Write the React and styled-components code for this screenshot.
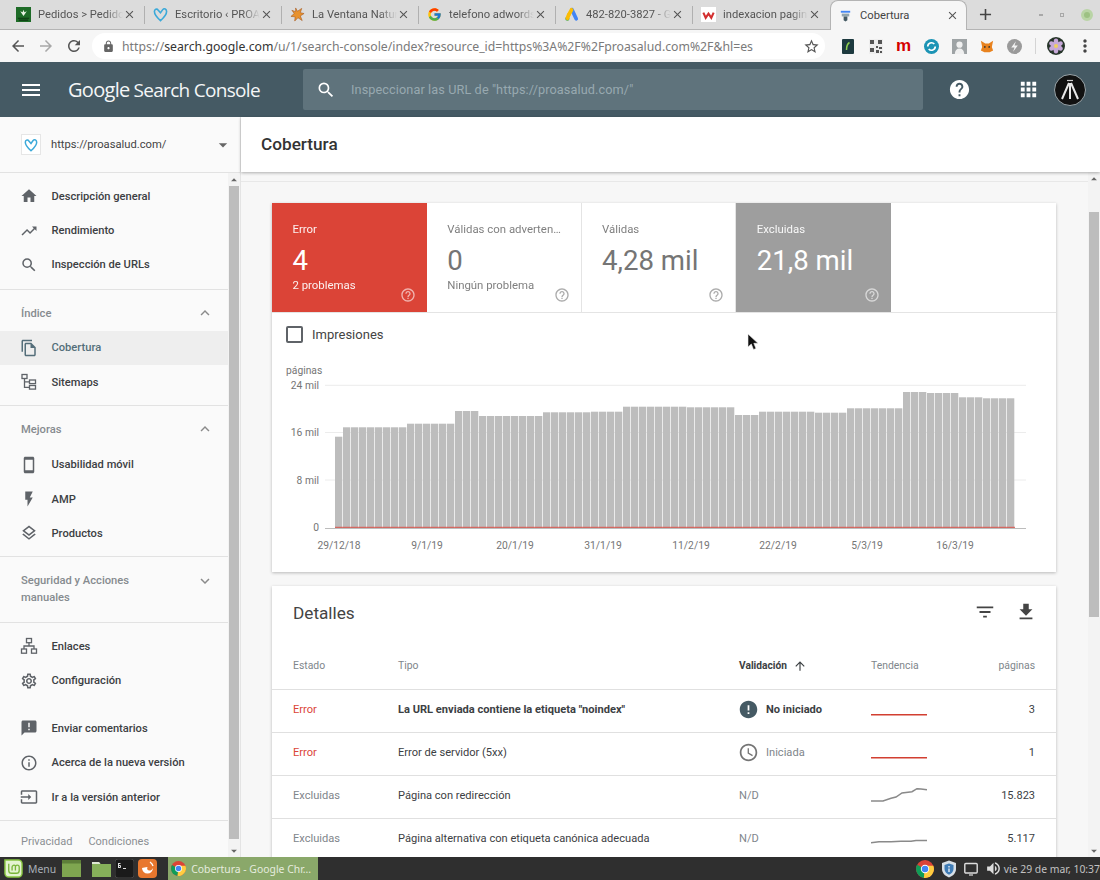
import React from "react";
import styled, { createGlobalStyle } from "styled-components";
import { FcGoogle } from "react-icons/fc";
import {
  MdAccessTime, MdAdd, MdAnnouncement, MdApps, MdArrowBack, MdArrowDropDown, MdArrowDropUp,
  MdArrowForward, MdArrowUpward, MdClose, MdError, MdExpandLess, MdExpandMore, MdFileDownload,
  MdFilterList, MdFlashOn, MdHelp, MdHelpOutline, MdHome, MdInfoOutline, MdInput, MdLock, MdMenu,
  MdMoreVert, MdOutlineFileCopy, MdOutlineLayers, MdOutlineSettings, MdOutlineSmartphone, MdRefresh,
  MdSearch, MdStarBorder, MdTrendingUp, MdVolumeUp,
} from "react-icons/md";

const GlobalStyle = createGlobalStyle`
  html, body { margin: 0; padding: 0; background: #fff; }
  body { font-family: Roboto, "Liberation Sans", sans-serif; }
  * { box-sizing: border-box; }
`;

const Screen = styled.div`
  position: relative;
  width: 1100px;
  height: 880px;
  overflow: hidden;
  display: flex;
  flex-direction: column;
`;

/* browser tabs */
const TabStrip = styled.div`
  height: 30px;
  flex: none;
  display: flex;
  align-items: center;
  padding-left: 8px;
  background: #dcdcdc;
  border-bottom: 1px solid #b4b4b4;
  font-family: Roboto, sans-serif;
`;
const Tab = styled.div`
  width: 137px;
  height: ${(p) => (p.$active ? "30px" : "18px")};
  display: flex;
  align-items: center;
  padding: 0 8px;
  color: #555;
  font-size: 11.2px;
  border-right: 1px solid ${(p) => (p.$sep ? "#b0b0b0" : "transparent")};
  ${(p) => p.$active && `
    margin-top: 1px;
    padding: 0 7px;
    background: #f6f6f6;
    border: 1px solid #b4b4b4;
    border-bottom: none;
    border-radius: 8px 8px 0 0;
    color: #444;
  `}
`;
const Favicon = styled.span`
  width: 15px;
  height: 15px;
  flex: none;
  display: flex;
  align-items: center;
  justify-content: center;
`;
const TabTitle = styled.span`
  flex: 1;
  margin-left: 7px;
  white-space: nowrap;
  overflow: hidden;
  mask-image: ${(p) => (p.$active ? "none" : "linear-gradient(90deg, #000 80%, transparent 100%)")};
`;
const TabClose = styled(MdClose)`
  flex: none;
  font-size: 13px;
  color: #555;
`;
const NewTab = styled(MdAdd)`
  margin-left: 9px;
  font-size: 19px;
  color: #444;
`;
const WindowControls = styled.div`
  margin-left: auto;
  display: flex;
  align-items: center;
  gap: 17px;
  padding-right: 7px;
`;
const WinDash = styled.span`
  width: 4px;
  height: 2px;
  background: #a8a8a8;
`;
const WinDot = styled.span`
  width: 4px;
  height: 4px;
  border: 1px solid #a8a8a8;
`;
const WinClose = styled.span`
  width: 12px;
  height: 12px;
  border-radius: 50%;
  background: #9dc183;
  border: 3px solid #b9d4a5;
`;

/* browser toolbar */
const Toolbar = styled.div`
  height: 32px;
  flex: none;
  display: flex;
  align-items: center;
  padding-left: 9px;
  background: #f6f6f6;
`;
const NavButton = styled.span`
  width: 18px;
  height: 18px;
  margin-right: 10px;
  font-size: 18px;
  line-height: 0;
  color: ${(p) => (p.$off ? "#a8a8a8" : "#555")};
`;
const Omnibox = styled.div`
  width: 733px;
  height: 26px;
  margin-left: -1px;
  padding: 0 5px 0 10px;
  display: flex;
  align-items: center;
  background: #fff;
  border-radius: 13px;
  font-family: "Noto Sans", sans-serif;
  font-size: 12.25px;
  color: #7a7a7a;
  white-space: nowrap;
`;
const LockIcon = styled(MdLock)`
  flex: none;
  font-size: 13px;
  color: #666;
  margin-right: 7px;
`;
const UrlHost = styled.span`
  color: #333;
`;
const StarIcon = styled(MdStarBorder)`
  margin-left: auto;
  font-size: 17px;
  color: #555;
`;
const Extensions = styled.div`
  margin-left: 9px;
  display: grid;
  grid-template-columns: repeat(7, 27.8px);
  justify-items: center;
  align-items: center;
`;
const ExtMark = styled.span`
  font: 700 17px/16px "Liberation Sans", sans-serif;
  color: #d50000;
`;
const ToolbarSep = styled.span`
  width: 1px;
  height: 16px;
  margin-left: 6px;
  background: #d4d4d4;
`;
const ProfileDot = styled.span`
  margin-left: 11px;
  line-height: 0;
`;
const MenuDots = styled(MdMoreVert)`
  margin-left: 10px;
  font-size: 20px;
  color: #444;
`;

/* search console bar */
const AppBar = styled.header`
  height: 55px;
  flex: none;
  display: flex;
  align-items: center;
  background: #455a64;
  color: #fff;
`;
const Hamburger = styled(MdMenu)`
  margin-left: 19px;
  font-size: 24px;
`;
const Logo = styled.div`
  width: 235px;
  margin-left: 25px;
  font-family: "Open Sans", sans-serif;
  font-size: 19px;
  letter-spacing: -0.7px;
  white-space: nowrap;
  color: #f4f6f7;
`;
const LogoStrong = styled.span`
  font-size: 20px;
  margin-right: 4px;
`;
const SearchBox = styled.div`
  width: 620px;
  height: 41px;
  display: flex;
  align-items: center;
  padding-left: 13px;
  background: #5f737c;
  border-radius: 2px;
  color: #98a9b0;
  font-size: 12.7px;
  letter-spacing: 0.1px;
`;
const SearchGlyph = styled(MdSearch)`
  flex: none;
  font-size: 20px;
  color: #fff;
  margin-right: 15px;
`;
const BarIcon = styled.span`
  line-height: 0;
  font-size: ${(p) => p.$size}px;
  margin-left: ${(p) => p.$left}px;
`;

/* body */
const Body = styled.div`
  flex: 1;
  min-height: 0;
  display: flex;
  color: #3c4043;
`;
const Sidebar = styled.aside`
  width: 241px;
  flex: none;
  display: flex;
  flex-direction: column;
  background: #fafafa;
  border-right: 1px solid #e4e4e4;
`;
const PropertyPicker = styled.div`
  height: 56px;
  flex: none;
  display: flex;
  align-items: center;
  padding: 0 7px 0 21px;
  background: #fafafa;
  border-bottom: 1px solid #e2e2e2;
  font-size: 11.2px;
  color: #444;
`;
const PropertyIcon = styled.span`
  width: 20px;
  height: 21px;
  margin-right: 10px;
  display: flex;
  align-items: center;
  justify-content: center;
  background: #fff;
  border: 1px solid #e6e6e6;
`;
const PropertyCaret = styled(MdArrowDropDown)`
  margin-left: auto;
  font-size: 20px;
  color: #666;
`;
const SideScroll = styled.div`
  flex: 1;
  min-height: 0;
  display: flex;
`;
const NavColumn = styled.nav`
  flex: 1;
  min-width: 0;
`;
const NavGroup = styled.div`
  padding: ${(p) => p.$top ?? 0}px 0 ${(p) => p.$bottom ?? 6.5}px;
  border-bottom: ${(p) => (p.$open ? "none" : "1px solid #e2e2e2")};
`;
const NavItem = styled.div`
  height: 34.4px;
  display: flex;
  align-items: center;
  padding-left: 20px;
  font-size: 11.15px;
  font-weight: 500;
  color: ${(p) => (p.$active ? "#546e7a" : "#3c4043")};
  background: ${(p) => (p.$active ? "#eeeeee" : "transparent")};
`;
const NavIcon = styled.span`
  width: 18px;
  margin-right: 13.5px;
  display: flex;
  justify-content: center;
  font-size: 18px;
  color: ${(p) => (p.$active ? "#546e7a" : "#5f6368")};
`;
const SectionHead = styled.div`
  min-height: 41px;
  display: flex;
  align-items: flex-start;
  justify-content: space-between;
  padding: 15px 14px 0 21px;
  font-size: 11.2px;
  line-height: 17px;
  font-weight: 500;
  color: #868b8f;
`;
const SectionLabel = styled.span`
  width: 130px;
`;
const SectionCaret = styled.span`
  font-size: 18px;
  line-height: 0;
  margin-top: ${(p) => (p.$tall ? "0" : "-1px")};
  color: #8a8a8a;
`;
const NavFooter = styled.div`
  height: 35px;
  display: flex;
  gap: 16px;
  padding: 14px 0 0 21px;
  font-size: 11px;
  color: #8b8f93;
`;
const ScrollBar = styled.div`
  width: 12px;
  flex: none;
  display: flex;
  flex-direction: column;
  align-items: center;
  background: #f3f3f3;
  color: #666;
`;
const ScrollArrow = styled.span`
  height: 13px;
  flex: none;
  font-size: 14px;
  line-height: 13px;
  display: flex;
  justify-content: center;
`;
const ScrollGap = styled.div`
  flex: 1;
`;
const ScrollThumb = styled.div`
  width: 10px;
  flex: none;
  height: ${(p) => p.$h}px;
  margin-top: ${(p) => p.$top}px;
  background: #bdbdbd;
`;

/* main column */
const Main = styled.main`
  flex: 1;
  min-width: 0;
  display: flex;
  flex-direction: column;
  background: #f7f7f7;
`;
const PageHead = styled.div`
  position: relative;
  z-index: 1;
  height: 55px;
  flex: none;
  display: flex;
  align-items: center;
  padding: 0 0 1px 20px;
  background: #fff;
  box-shadow: 0 1px 3px rgba(0, 0, 0, 0.3);
  font-size: 17.2px;
  font-weight: 500;
  color: #333;
`;
const MainRow = styled.div`
  flex: 1;
  min-height: 0;
  display: flex;
`;
const Content = styled.div`
  flex: 1;
  min-width: 0;
  overflow: hidden;
  padding-top: 9px;
`;
const ContentInner = styled.div`
  border-top: 1px solid #e8e8e8;
  padding: 21px 32px 0 31px;
  display: flex;
  flex-direction: column;
  gap: 14px;
`;
const Card = styled.section`
  background: #fff;
  box-shadow: 0 1px 3px rgba(0, 0, 0, 0.25);
`;
const Tiles = styled.div`
  display: flex;
  height: 110px;
  border-bottom: 1px solid #e4e4e4;
`;
const toneColors = {
  error: "background:#db4437;color:#fff;",
  excluded: "background:#9e9e9e;color:#fff;",
  plain: "background:#fff;color:#757575;border-right:1px solid #e4e4e4;",
};
const Tile = styled.div`
  position: relative;
  width: 154.75px;
  padding: 19px 18px 0 20.5px;
  ${(p) => toneColors[p.$tone]}
`;
const TileLabel = styled.div`
  font-size: 11.4px;
  line-height: 14px;
  white-space: nowrap;
  overflow: hidden;
  text-overflow: ellipsis;
  opacity: 0.92;
`;
const TileValue = styled.div`
  margin-top: 8px;
  font-size: 27.6px;
  line-height: 34px;
  white-space: nowrap;
`;
const TileNote = styled.div`
  font-size: 11.4px;
  line-height: 14px;
  opacity: 0.92;
`;
const TileHelp = styled(MdHelpOutline)`
  position: absolute;
  right: 11px;
  bottom: 9px;
  font-size: 16px;
  opacity: 0.6;
`;
const ToggleRow = styled.div`
  height: 44px;
  display: flex;
  align-items: center;
  padding: 0 0 2px 14px;
  font-size: 13px;
  color: #444;
`;
const CheckBox = styled.span`
  width: 17px;
  height: 17px;
  margin-right: 9px;
  border: 2px solid #5f6368;
  border-radius: 2px;
`;
const ChartBox = styled.div`
  height: 215px;
  line-height: 0;
`;
const DetailsHead = styled.div`
  height: 54px;
  display: flex;
  align-items: center;
  padding: 0 19px 0 21px;
  font-size: 17.2px;
  color: #444;
`;
const DetailsTitle = styled.span`
  flex: 1;
`;
const HeadIcon = styled.span`
  font-size: 22px;
  line-height: 0;
  margin: -3px 0 0 ${(p) => p.$left}px;
  color: #444;
`;
const Row = styled.div`
  display: grid;
  grid-template-columns: 105px 341px 132px 1fr 90px;
  align-items: center;
  height: ${(p) => (p.$head ? "50px" : "43px")};
  padding: ${(p) => (p.$head ? "2px 21px 0" : "0 21px 3px")};
  border-bottom: 1px solid #e0e0e0;
  font-size: 11.1px;
  color: #3c4043;
`;
const HeadCell = styled.span`
  display: flex;
  align-items: center;
  font-size: ${(p) => (p.$strong ? "10.2px" : "10.4px")};
  font-weight: ${(p) => (p.$strong ? 700 : 400)};
  color: ${(p) => (p.$strong ? "#3c4043" : "#80868b")};
  justify-content: ${(p) => (p.$end ? "flex-end" : "flex-start")};
`;
const SortArrow = styled(MdArrowUpward)`
  margin-left: 6px;
  font-size: 14px;
`;
const StatusCell = styled.span`
  color: ${(p) => (p.$error ? "#db4437" : "#80868b")};
`;
const TypeCell = styled.span`
  font-weight: ${(p) => (p.$strong ? 700 : 400)};
`;
const ValidationCell = styled.span`
  display: flex;
  align-items: center;
  gap: 7px;
  font-weight: ${(p) => (p.$strong ? 700 : 400)};
  color: ${(p) => (p.$muted ? "#80868b" : "#3c4043")};
`;
const ValidationIcon = styled.span`
  font-size: 21px;
  line-height: 0;
  margin-left: -1px;
  color: ${(p) => p.$color};
`;
const TrendCell = styled.span`
  line-height: 0;
`;
const PagesCell = styled.span`
  text-align: right;
  font-size: 11px;
`;

/* taskbar */
const Taskbar = styled.footer`
  height: 23px;
  flex: none;
  display: flex;
  align-items: center;
  padding-left: 4px;
  background: #2f2f2f;
  color: #b8b8b8;
  font-family: "Noto Sans", sans-serif;
  font-size: 10.7px;
`;
const MenuLabel = styled.span`
  margin: 0 6px 0 5px;
  font-size: 10.4px;
  color: #a9b0b8;
`;
const TaskSlot = styled.span`
  line-height: 0;
  margin-left: ${(p) => p.$left ?? 0}px;
`;
const WindowButton = styled.div`
  width: 150px;
  height: 23px;
  margin-left: 11px;
  display: flex;
  align-items: center;
  gap: 5px;
  padding-left: 3px;
  background: #8aa86a;
  color: #e6ecdf;
  font-size: 10.4px;
  white-space: nowrap;
  svg { flex: none; }
`;
const Tray = styled.div`
  margin-left: auto;
  display: flex;
  align-items: center;
  gap: 7px;
`;
const TrayText = styled.span`
  margin-left: -5px;
  font-size: 10.4px;
  white-space: nowrap;
  color: #c2c2c2;
`;
const Pointer = styled.svg`
  position: absolute;
  left: 747px;
  top: 333px;
`;

const Heart = ({ size = 15 }) => (
  <svg width={size} height={size} viewBox="0 0 16 16" fill="none" stroke="#3ba9d9" strokeWidth="1.7">
    <path d="M8 14.5C4 11 1.5 8 1.5 4.8 1.5 2.8 4 1 5.6 3.4L8 6.2l2.4-3.4C12 .8 14.5 2.5 14.5 4.8 14.5 8 12 11 8 14.5z" />
  </svg>
);
const VShop = () => (
  <svg width="15" height="15" viewBox="0 0 16 16">
    <rect width="16" height="16" fill="#1e6b27" />
    <path d="M8 9.5 4.5 4.5 7 5.5 8 3l1 2.5 2.5-1z" fill="#eaf3e4" />
    <path d="M2 12h12M3 14h10" stroke="#0c3a12" strokeWidth="1.3" />
  </svg>
);
const Splat = () => (
  <svg width="15" height="15" viewBox="0 0 16 16">
    <path d="M6 1l2 3.5L12.500 1.500 11 6l4 1-4 2.500 2 5-4.500-3L5 15l.5-4.500L1 10l3.500-3L2 3.500l4 1.500z" fill="#e8912c" stroke="#a4561a" strokeWidth=".6" />
  </svg>
);
const AdsMark = () => (
  <svg width="15" height="15" viewBox="0 0 16 16" fill="none" strokeLinecap="round" strokeWidth="4">
    <path d="M8.500 3 13 12.500" stroke="#4285f4" />
    <path d="M8 3 5 8.500" stroke="#fbbc04" />
    <circle cx="3.600" cy="12.500" r="2.200" fill="#34a853" stroke="none" />
    <path d="M5 8.500 3.600 12" stroke="#fbbc04" />
  </svg>
);
const WMark = () => (
  <svg width="15" height="15" viewBox="0 0 16 16" fill="none">
    <rect width="16" height="16" fill="#fff" />
    <path d="M2.500 6 5 11.500 8 7l3 4.500L13.500 6" stroke="#d32f2f" strokeWidth="2.200" />
  </svg>
);
const ConsoleMark = () => (
  <svg width="15" height="15" viewBox="0 0 16 16">
    <path d="M3 3h10v2H3z" fill="#4285f4" />
    <path d="M4 6h8v3H4z" fill="#90a4ae" />
    <path d="M6 9h4v4l-2 1.500L6 13z" fill="#455a64" />
  </svg>
);
const ChromeMark = ({ size = 15 }) => (
  <svg width={size} height={size} viewBox="0 0 16 16">
    <circle cx="8" cy="8" r="8" fill="#db4437" />
    <path d="M8 8 1 4.200A8 8 0 0 0 7 15.900z" fill="#0f9d58" />
    <path d="M8 5h7.400A8 8 0 0 1 7 15.900z" fill="#ffcd40" />
    <circle cx="8" cy="8" r="3.700" fill="#fff" />
    <circle cx="8" cy="8" r="2.900" fill="#4285f4" />
  </svg>
);
const SitemapIcon = () => (
  <svg width="18" height="18" viewBox="0 0 18 18" fill="none" stroke="#5f6368" strokeWidth="1.300">
    <rect x="2" y="1.500" width="5" height="4" />
    <rect x="9.500" y="7" width="6" height="3.600" />
    <rect x="9.500" y="12.500" width="6" height="3.600" />
    <path d="M4.500 5.500V14.300H9.500M4.500 8.800H9.500" />
  </svg>
);
const LinksIcon = () => (
  <svg width="18" height="18" viewBox="0 0 18 18" fill="none" stroke="#5f6368" strokeWidth="1.300">
    <rect x="6.500" y="1.500" width="5" height="4.200" />
    <rect x="1.500" y="12" width="5" height="4.200" />
    <rect x="11.500" y="12" width="5" height="4.200" />
    <path d="M9 5.700V9M4 12V9H14V12" />
  </svg>
);
const AwenAvatar = () => (
  <svg width="32" height="32" viewBox="0 0 32 32">
    <circle cx="16" cy="16" r="15.500" fill="#111" stroke="#9aa5aa" strokeWidth="1" />
    <path d="M16 9v16M15 9 8 25M17 9l7 16" stroke="#e8e8e8" strokeWidth="2" fill="none" />
    <path d="M13 6.500h6" stroke="#ccc" strokeWidth="1.200" />
  </svg>
);
const FlowerAvatar = () => (
  <svg width="18" height="18" viewBox="0 0 18 18">
    <circle cx="9" cy="9" r="9" fill="#27352a" />
    {[0, 60, 120, 180, 240, 300].map((a) => (
      <ellipse key={a} cx="9" cy="4.800" rx="2.300" ry="3.300" fill="#c7a9d8" transform={`rotate(${a} 9 9)`} />
    ))}
    <circle cx="9" cy="9" r="2" fill="#f0d060" />
  </svg>
);
const QrMark = () => (
  <svg width="14" height="15" viewBox="0 0 14 15" fill="#555">
    <rect width="14" height="15" fill="#eee" />
    <path d="M1 1h4v4H1zM9 1h4v4H9zM1 9h4v4H1zM7 7h2v2H7zM10 8h3v2h-3zM7 11h3v3H7zM11 12h2v2h-2z" />
  </svg>
);
const ExtDark = () => (
  <svg width="12" height="15" viewBox="0 0 12 15">
    <rect width="12" height="15" rx="1" fill="#1d3a3f" />
    <path d="M7.500 3.500C5 5 4.500 8 4.500 11" stroke="#8fd14f" strokeWidth="1.500" fill="none" />
  </svg>
);
const ExtRing = () => (
  <svg width="15" height="15" viewBox="0 0 16 16">
    <circle cx="8" cy="8" r="8" fill="#1c94b5" />
    <path d="M4 8a4 4 0 0 1 7-2.600M12 8a4 4 0 0 1-7 2.600" stroke="#fff" strokeWidth="1.800" fill="none" />
  </svg>
);
const ExtPerson = () => (
  <svg width="15" height="15" viewBox="0 0 16 16">
    <rect width="16" height="16" fill="#9ea3a5" />
    <circle cx="8" cy="6" r="3.300" fill="#f0f0f0" />
    <path d="M3 16c0-4 2-6 5-6s5 2 5 6z" fill="#f0f0f0" />
  </svg>
);
const ExtFox = () => (
  <svg width="14" height="14" viewBox="0 0 16 16">
    <path d="M1 2l5 3h4l5-3-1.500 7L15 13l-4 2H5l-4-2 1.500-4z" fill="#e8821e" />
    <circle cx="5.500" cy="9" r="1" fill="#333" />
    <circle cx="10.500" cy="9" r="1" fill="#333" />
  </svg>
);
const ExtBolt = () => (
  <svg width="15" height="15" viewBox="0 0 16 16">
    <circle cx="8" cy="8" r="8" fill="#9a9a9a" />
    <path d="M9.500 2.500 4.500 9H8l-1.500 4.500L11.500 7H8z" fill="#f4f4f4" />
  </svg>
);
const MintLogo = () => (
  <svg width="19" height="19" viewBox="0 0 20 20" fill="none">
    <path d="M1 1h14a4 4 0 0 1 4 4v10a4 4 0 0 1-4 4H5a4 4 0 0 1-4-4z" fill="#e4f3d0" stroke="#87c540" strokeWidth="1.500" />
    <path d="M5 5v7a3 3 0 0 0 3 3h5a3 3 0 0 0 3-3V8.500a2 2 0 0 0-4 0V12M8.500 12V8.500a2 2 0 0 1 3.500-1.300" stroke="#79b539" strokeWidth="1.400" />
  </svg>
);
const FolderPlain = () => (
  <svg width="19" height="17" viewBox="0 0 19 17">
    <rect width="19" height="17" fill="#7fa650" />
    <rect width="19" height="3.500" fill="#5d7e39" />
  </svg>
);
const FolderTab = () => (
  <svg width="19" height="17" viewBox="0 0 19 17">
    <path d="M0 2h7l1.500 2H19v13H0z" fill="#86b05a" />
    <path d="M0 2h7l1.500 2H0z" fill="#dfe8d4" />
  </svg>
);
const TerminalIcon = () => (
  <svg width="19" height="19" viewBox="0 0 19 19" fill="none">
    <rect width="19" height="19" rx="3" fill="#1a1a1a" stroke="#444" />
    <path d="M3.500 4v5M5.500 4.500h-2v2h2v2h-2M8 9.500h3" stroke="#ddd" strokeWidth="1" />
  </svg>
);
const FoxOrange = () => (
  <svg width="19" height="19" viewBox="0 0 19 19" fill="none">
    <rect width="19" height="19" rx="4" fill="#e8772e" />
    <path d="M4 9a5.500 5.500 0 1 0 11 0c-1 2-2 2.500-3.500 2.500-2 0-3-1.500-2-3.500-2.500 0-4 1-5.500 1z" fill="#fff" />
    <path d="M12 3c1.500 1 2.500 2 3 4" stroke="#fff" strokeWidth="1.300" />
  </svg>
);
const ShieldIcon = () => (
  <svg width="16" height="18" viewBox="0 0 16 18">
    <path d="M8 .5 15 3v6c0 4-3 7-7 8.500C4 16 1 13 1 9V3z" fill="#d7dfe6" />
    <path d="M8 3.500 12.500 5v4c0 2.500-2 4.700-4.500 5.700C5.500 13.700 3.500 11.500 3.500 9V5z" fill="#3f7cb6" />
    <path d="M8 6v1.500M8 8.500V12" stroke="#fff" strokeWidth="1.200" />
  </svg>
);
const MonitorIcon = () => (
  <svg width="14" height="14" viewBox="0 0 14 14" fill="none">
    <rect x=".8" y="1.500" width="12.400" height="9.500" rx="1" stroke="#ddd" strokeWidth="1.400" />
    <path d="M5 13h4" stroke="#ddd" strokeWidth="1.200" />
  </svg>
);

const runs = [
  [1, 436.7], [8, 427.3], [6, 423.7], [3, 411], [8, 416], [6, 412.3], [4, 411.7],
  [8, 406.7], [6, 407.3], [3, 415], [7, 411.7], [4, 412.7], [7, 408.3], [3, 392],
  [4, 393], [3, 397.3], [4, 398.3],
];
const barTops = runs.flatMap(([n, top]) => Array(n).fill(top));

// svg y = screen y - 357, svg x = screen x - 272
const gridRows = [
  ["24 mil", 28.3],
  ["16 mil", 75.5],
  ["8 mil", 123],
];
const xLabels = [
  ["29/12/18", 67], ["9/1/19", 155], ["20/1/19", 243], ["31/1/19", 331],
  ["11/2/19", 419], ["22/2/19", 506], ["5/3/19", 595], ["16/3/19", 683],
];

const CoverageChart = () => (
  <svg width="784" height="215" viewBox="0 0 784 215" fontFamily="Roboto, sans-serif" fontSize="10.3" fill="#757575">
    <text x="14" y="17">páginas</text>
    {gridRows.map(([label, y]) => (
      <g key={label}>
        <line x1="53" x2="754" y1={y} y2={y} stroke="#ececec" />
        <text x="47" y={y + 3.500} textAnchor="end">{label}</text>
      </g>
    ))}
    {barTops.map((top, i) => (
      <rect key={i} x={63 + i * 8} y={top - 357} width="7.300" height={527.5 - top + 0.5} fill="#bdbdbd" />
    ))}
    <line x1="53" x2="754" y1="171.500" y2="171.500" stroke="#bcbcbc" />
    <line x1="63" x2="743" y1="170.300" y2="170.300" stroke="#d9534a" strokeWidth="1" />
    <text x="47" y="174" textAnchor="end">0</text>
    {xLabels.map(([label, x]) => (
      <text key={label} x={x} y="192" textAnchor="middle">{label}</text>
    ))}
  </svg>
);

const Spark = ({ d, color }) => (
  <svg width="56" height="16" viewBox="0 0 56 16" fill="none">
    <path d={d} stroke={color} strokeWidth="1.500" />
  </svg>
);

const tabs = [
  { title: "Pedidos > Pedidos", icon: <VShop />, sep: true },
  { title: "Escritorio ‹ PROASALUD", icon: <Heart />, sep: true },
  { title: "La Ventana Natural", icon: <Splat />, sep: true },
  { title: "telefono adwords", icon: <FcGoogle size={15} />, sep: true },
  { title: "482-820-3827 - Google", icon: <AdsMark />, sep: true },
  { title: "indexacion paginas", icon: <WMark /> },
];

const rows = [
  { status: "Error", error: true, type: 'La URL enviada contiene la etiqueta "noindex"', strong: true, validation: "No iniciado", trend: "M0 12.700H56", color: "#d23f31", pages: "3" },
  { status: "Error", error: true, type: "Error de servidor (5xx)", validation: "Iniciada", clock: true, trend: "M0 12.700H56", color: "#d23f31", pages: "1" },
  { status: "Excluidas", type: "Página con redirección", validation: "N/D", trend: "M0 13H12L20 10.300 25 9 31 5 41 3.700 46 .7 50 1 56 1.800", color: "#8a8a8a", pages: "15.823" },
  { status: "Excluidas", type: "Página alternativa con etiqueta canónica adecuada", validation: "N/D", trend: "M0 11.700 8 10.700H20L30 10.300H40L45 9.500H56", color: "#8a8a8a", pages: "5.117" },
];

const Item = ({ icon, label, active }) => (
  <NavItem $active={active}>
    <NavIcon $active={active}>{icon}</NavIcon>
    {label}
  </NavItem>
);

export default function App() {
  return (
    <Screen>
      <GlobalStyle />
      <TabStrip>
        {tabs.map((t) => (
          <Tab key={t.title} $sep={t.sep}>
            <Favicon>{t.icon}</Favicon>
            <TabTitle>{t.title}</TabTitle>
            <TabClose />
          </Tab>
        ))}
        <Tab $active>
          <Favicon><ConsoleMark /></Favicon>
          <TabTitle $active>Cobertura</TabTitle>
          <TabClose />
        </Tab>
        <NewTab />
        <WindowControls>
          <WinDash />
          <WinDot />
          <WinClose />
        </WindowControls>
      </TabStrip>

      <Toolbar>
        <NavButton><MdArrowBack /></NavButton>
        <NavButton $off><MdArrowForward /></NavButton>
        <NavButton><MdRefresh /></NavButton>
        <Omnibox>
          <LockIcon />
          https://<UrlHost>search.google.com</UrlHost>/u/1/search-console/index?resource_id=https%3A%2F%2Fproasalud.com%2F&amp;hl=es
          <StarIcon />
        </Omnibox>
        <Extensions>
          <ExtDark />
          <QrMark />
          <ExtMark>m</ExtMark>
          <ExtRing />
          <ExtPerson />
          <ExtFox />
          <ExtBolt />
        </Extensions>
        <ToolbarSep />
        <ProfileDot><FlowerAvatar /></ProfileDot>
        <MenuDots />
      </Toolbar>

      <AppBar>
        <Hamburger />
        <Logo><LogoStrong>Google</LogoStrong>Search Console</Logo>
        <SearchBox>
          <SearchGlyph />
          Inspeccionar las URL de "https://proasalud.com/"
        </SearchBox>
        <BarIcon $size={23} $left={25}><MdHelp /></BarIcon>
        <BarIcon $size={23} $left={46}><MdApps /></BarIcon>
        <BarIcon $size={32} $left={14}><AwenAvatar /></BarIcon>
      </AppBar>

      <Body>
        <Sidebar>
          <PropertyPicker>
            <PropertyIcon><Heart size={14} /></PropertyIcon>
            https://proasalud.com/
            <PropertyCaret />
          </PropertyPicker>
          <SideScroll>
            <NavColumn>
              <NavGroup $top={6}>
                <Item icon={<MdHome />} label="Descripción general" />
                <Item icon={<MdTrendingUp />} label="Rendimiento" />
                <Item icon={<MdSearch />} label="Inspección de URLs" />
              </NavGroup>
              <NavGroup $bottom={6}>
                <SectionHead>
                  <SectionLabel>Índice</SectionLabel>
                  <SectionCaret><MdExpandLess /></SectionCaret>
                </SectionHead>
                <Item active icon={<MdOutlineFileCopy />} label="Cobertura" />
                <Item icon={<SitemapIcon />} label="Sitemaps" />
              </NavGroup>
              <NavGroup $bottom={5.500}>
                <SectionHead>
                  <SectionLabel>Mejoras</SectionLabel>
                  <SectionCaret><MdExpandLess /></SectionCaret>
                </SectionHead>
                <Item icon={<MdOutlineSmartphone />} label="Usabilidad móvil" />
                <Item icon={<MdFlashOn />} label="AMP" />
                <Item icon={<MdOutlineLayers />} label="Productos" />
              </NavGroup>
              <NavGroup $bottom={16}>
                <SectionHead>
                  <SectionLabel>Seguridad y Acciones manuales</SectionLabel>
                  <SectionCaret $tall><MdExpandMore /></SectionCaret>
                </SectionHead>
              </NavGroup>
              <NavGroup $top={6} $bottom={13.200} $open>
                <Item icon={<LinksIcon />} label="Enlaces" />
                <Item icon={<MdOutlineSettings />} label="Configuración" />
              </NavGroup>
              <NavGroup $bottom={6}>
                <Item icon={<MdAnnouncement />} label="Enviar comentarios" />
                <Item icon={<MdInfoOutline />} label="Acerca de la nueva versión" />
                <Item icon={<MdInput />} label="Ir a la versión anterior" />
              </NavGroup>
              <NavFooter>
                <span>Privacidad</span>
                <span>Condiciones</span>
              </NavFooter>
            </NavColumn>
            <ScrollBar>
              <ScrollArrow><MdArrowDropUp /></ScrollArrow>
              <ScrollThumb $top={0} $h={653} />
              <ScrollGap />
              <ScrollArrow><MdArrowDropDown /></ScrollArrow>
            </ScrollBar>
          </SideScroll>
        </Sidebar>

        <Main>
          <PageHead>Cobertura</PageHead>
          <MainRow>
            <Content>
              <ContentInner>
                <Card>
                  <Tiles>
                    <Tile $tone="error">
                      <TileLabel>Error</TileLabel>
                      <TileValue>4</TileValue>
                      <TileNote>2 problemas</TileNote>
                      <TileHelp />
                    </Tile>
                    <Tile $tone="plain">
                      <TileLabel>Válidas con advertencias</TileLabel>
                      <TileValue>0</TileValue>
                      <TileNote>Ningún problema</TileNote>
                      <TileHelp />
                    </Tile>
                    <Tile $tone="plain">
                      <TileLabel>Válidas</TileLabel>
                      <TileValue>4,28 mil</TileValue>
                      <TileHelp />
                    </Tile>
                    <Tile $tone="excluded">
                      <TileLabel>Excluidas</TileLabel>
                      <TileValue>21,8 mil</TileValue>
                      <TileHelp />
                    </Tile>
                  </Tiles>
                  <ToggleRow>
                    <CheckBox />
                    Impresiones
                  </ToggleRow>
                  <ChartBox><CoverageChart /></ChartBox>
                </Card>
                <Card>
                  <DetailsHead>
                    <DetailsTitle>Detalles</DetailsTitle>
                    <HeadIcon $left={0}><MdFilterList /></HeadIcon>
                    <HeadIcon $left={19}><MdFileDownload /></HeadIcon>
                  </DetailsHead>
                  <Row $head>
                    <HeadCell>Estado</HeadCell>
                    <HeadCell>Tipo</HeadCell>
                    <HeadCell $strong>Validación <SortArrow /></HeadCell>
                    <HeadCell>Tendencia</HeadCell>
                    <HeadCell $end>páginas</HeadCell>
                  </Row>
                  {rows.map((r) => (
                    <Row key={r.type}>
                      <StatusCell $error={r.error}>{r.status}</StatusCell>
                      <TypeCell $strong={r.strong}>{r.type}</TypeCell>
                      <ValidationCell $strong={r.strong} $muted={!r.strong}>
                        {r.strong && <ValidationIcon $color="#455a64"><MdError /></ValidationIcon>}
                        {r.clock && <ValidationIcon $color="#757575"><MdAccessTime /></ValidationIcon>}
                        {r.validation}
                      </ValidationCell>
                      <TrendCell><Spark d={r.trend} color={r.color} /></TrendCell>
                      <PagesCell>{r.pages}</PagesCell>
                    </Row>
                  ))}
                </Card>
              </ContentInner>
            </Content>
            <ScrollBar>
              <ScrollArrow><MdArrowDropUp /></ScrollArrow>
              <ScrollThumb $top={27} $h={405} />
              <ScrollGap />
              <ScrollArrow><MdArrowDropDown /></ScrollArrow>
            </ScrollBar>
          </MainRow>
        </Main>
      </Body>

      <Taskbar>
        <TaskSlot><MintLogo /></TaskSlot>
        <MenuLabel>Menu</MenuLabel>
        <TaskSlot><FolderPlain /></TaskSlot>
        <TaskSlot $left={11}><FolderTab /></TaskSlot>
        <TaskSlot $left={4}><TerminalIcon /></TaskSlot>
        <TaskSlot $left={4}><FoxOrange /></TaskSlot>
        <WindowButton>
          <ChromeMark />
          Cobertura - Google Chr...
        </WindowButton>
        <Tray>
          <ChromeMark size={18} />
          <ShieldIcon />
          <MonitorIcon />
          <MdVolumeUp size={17} color="#ddd" />
          <TrayText>vie 29 de mar, 10:37</TrayText>
        </Tray>
      </Taskbar>

      <Pointer width="13" height="18" viewBox="0 0 13 18">
        <path d="M1 1v13l3.300-3 2.200 5.500 2.500-1L6.800 10.300H11z" fill="#111" stroke="#eee" strokeWidth=".6" />
      </Pointer>
    </Screen>
  );
}
